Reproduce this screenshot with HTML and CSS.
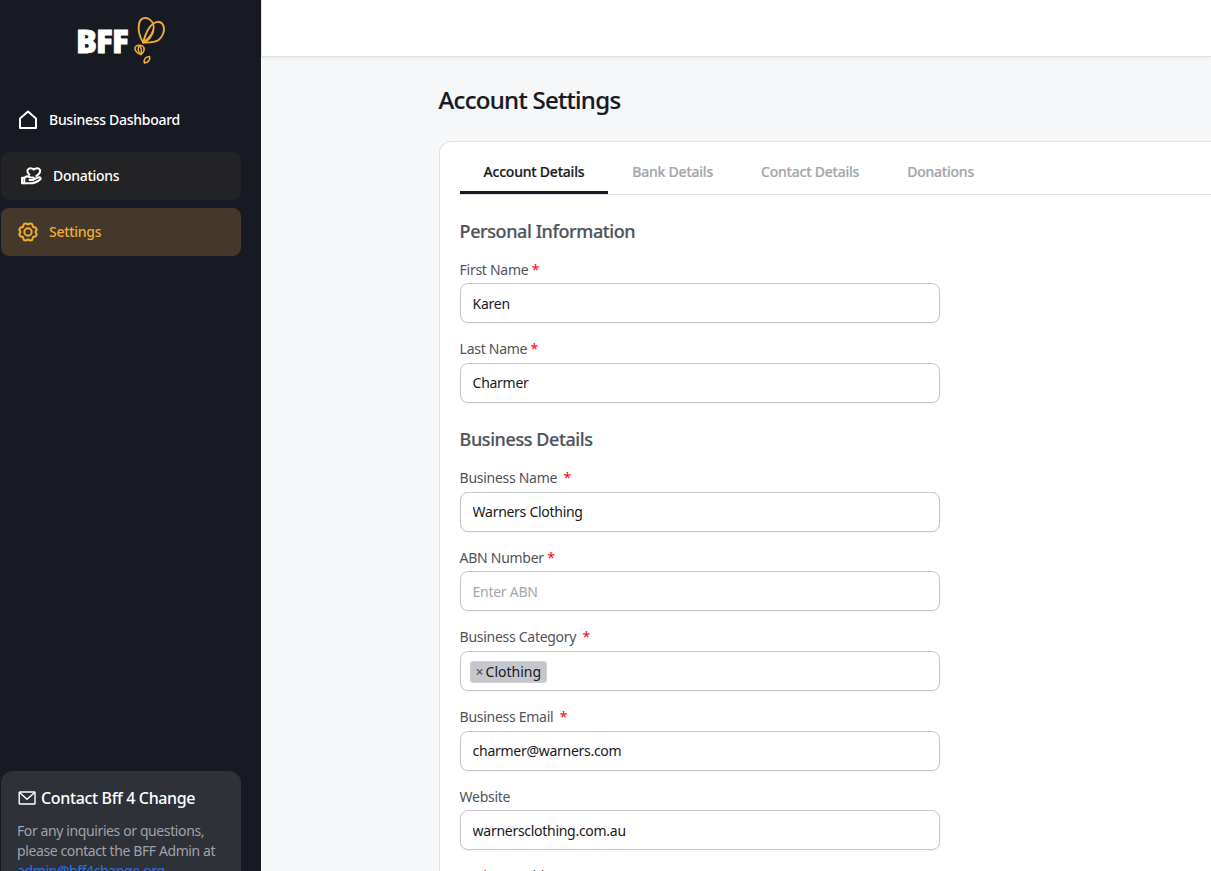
FILE: index.html
```html
<!DOCTYPE html>
<html lang="en">
<head>
  <meta charset="UTF-8">
  <meta name="viewport" content="width=device-width, initial-scale=1.0">
  <title>Account Settings</title>
  <link rel="stylesheet" href="styles.css">
</head>
<body>
  <aside class="sidebar">
    <div class="logo">
      <span class="logo-text">BFF</span>
      <svg class="logo-mark" width="32" height="50" viewBox="0 0 32 50" fill="none" stroke="#f0ac35" stroke-width="1.9" stroke-linecap="round" stroke-linejoin="round">
        <path d="M10.3 26.5C6 20 5 13.500 6 8C7 2 12 .8 16 3C20.500 5.800 21.500 11 20 15.500C18 20 14 24 10.300 26.500Z"/>
        <path d="M10.300 26.500C12 19 15 11.500 20 7.800C24 4.500 29 5.500 30.500 10C32 15 29.500 21 25.500 24C21 27 15 26.500 10.300 26.500Z"/>
        <path d="M10.300 26.500C15 25 20 19.500 20 14.500"/>
        <path d="M8 38.500C4 37.500 1.500 34.500 2 31.500C3 29 7 28.500 9.500 30C12.500 32 11 36.500 8 38.500Z" stroke-width="1.500"/>
        <path d="M8 38.500C5 36 4.500 32.500 6 30.500M8 38.500C8.500 36 9 33 7 30.500" stroke-width="1.400"/>
        <path d="M11.500 47C10.500 43.500 12 41 16.500 40.500C17.500 43.500 15.500 46.500 11.500 47Z" stroke-width="1.600"/>
      </svg>
    </div>
    <nav class="menu">
      <a class="menu-item" href="#">
        <svg width="20" height="20" viewBox="0 0 20 20" fill="none" stroke="#fff" stroke-width="2" stroke-linejoin="round"><path d="M2 8.400 10 1.600 18 8.400V18H2Z"/></svg>
        <span>Business Dashboard</span>
      </a>
      <a class="menu-item donations" href="#">
        <svg width="22" height="18" viewBox="0 0 22 18" fill="none" stroke="#fff" stroke-width="2" stroke-linecap="round" stroke-linejoin="round">
          <path d="M2 10.800H4.300V16.300H2Z"/>
          <path d="M4.500 10.800C6 9 8.500 9.200 10.500 10.600H12.800C14.600 10.800 14.300 13 12.600 13H9.500M13.800 12.300 18.500 10.300C20.300 9.800 21.300 11.300 20 12.600C17 15 13.500 16.300 10 16.300H4"/>
          <path d="M9.300 7.700C7.500 6 7 4.300 7.800 2.700C9 .7 12 .7 13.800 2.700C15.600 .7 18.700 .7 19.900 2.700C20.700 5 18.700 7.500 16.300 9"/>
        </svg>
        <span>Donations</span>
      </a>
      <a class="menu-item active" href="#">
        <svg width="20" height="20" viewBox="0 0 20 20" fill="none" stroke="#f0ac35" stroke-width="2" stroke-linejoin="round">
          <path d="M7.700 1.300 10 2.500 12.300 1.300 14.200 2.100 14.900 4.700 17.700 5.700 18.700 7.700 17.500 10 18.700 12.300 17.700 14.300 14.900 15.300 14.200 17.900 12.300 18.700 10 17.500 7.700 18.700 5.800 17.900 5.100 15.300 2.300 14.300 1.300 12.300 2.500 10 1.300 7.700 2.300 5.700 5.100 4.700 5.800 2.100Z"/>
          <circle cx="10" cy="10" r="3.700"/>
        </svg>
        <span>Settings</span>
      </a>
    </nav>
    <div class="contact">
      <h4 class="contact-title">
        <svg width="20" height="16" viewBox="0 0 20 16" fill="none" stroke="#fff" stroke-width="1.4" stroke-linejoin="round"><rect x="2.200" y="2" width="15.800" height="12" rx=".6"/><path d="M2.500 2.500 10 9.300 17.700 2.500"/></svg>
        Contact Bff 4 Change
      </h4>
      <p>For any inquiries or questions, please contact the BFF Admin at <a href="#">admin@bff4change.org</a></p>
    </div>
  </aside>

  <div class="page">
    <header class="topbar"></header>
    <main class="content">
      <h1>Account Settings</h1>
      <div class="card">
        <div class="tabs">
          <a class="tab selected" href="#">Account Details</a>
          <a class="tab" href="#">Bank Details</a>
          <a class="tab" href="#">Contact Details</a>
          <a class="tab" href="#">Donations</a>
        </div>
        <form class="form">
          <h3>Personal Information</h3>
          <div class="field">
            <label for="first">First Name <span class="req">*</span></label>
            <input type="text" id="first" value="Karen">
          </div>
          <div class="field">
            <label for="last">Last Name <span class="req">*</span></label>
            <input type="text" id="last" value="Charmer">
          </div>
          <h3 class="second">Business Details</h3>
          <div class="field">
            <label for="business">Business Name <span class="req wide">*</span></label>
            <input type="text" id="business" value="Warners Clothing">
          </div>
          <div class="field">
            <label for="abn">ABN Number <span class="req">*</span></label>
            <input type="text" id="abn" placeholder="Enter ABN">
          </div>
          <div class="field">
            <label>Business Category <span class="req wide">*</span></label>
            <div class="select">
              <span class="tag"><span class="tag-remove">×</span>Clothing</span>
            </div>
          </div>
          <div class="field">
            <label for="email">Business Email <span class="req wide">*</span></label>
            <input type="text" id="email" value="charmer@warners.com">
          </div>
          <div class="field">
            <label for="website">Website</label>
            <input type="text" id="website" value="warnersclothing.com.au">
          </div>
          <div class="field">
            <label for="address">Business Address</label>
            <input type="text" id="address">
          </div>
        </form>
      </div>
    </main>
  </div>
</body>
</html>
```

FILE: styles.css
```css
* {
  box-sizing: border-box;
}

body {
  margin: 0;
  height: 100vh;
  display: flex;
  overflow: hidden;
  background: #f6f7f9;
  font-family: "Noto Sans", sans-serif;
  font-size: 14px;
  line-height: 1.4;
  letter-spacing: -0.02em;
  color: #171923;
}

a {
  text-decoration: none;
}

h1,
h3,
h4,
p {
  margin: 0;
}

/* Sidebar */
.sidebar {
  width: 261px;
  flex-shrink: 0;
  display: flex;
  flex-direction: column;
  background: #171923;
  color: #fff;
}

.logo {
  display: flex;
  padding: 16px 0 0 76px;
  height: 96px;
}

.logo-text {
  width: 57px;
  padding-top: 4px;
  font-family: "Open Sans", sans-serif;
  font-size: 31px;
  font-weight: 800;
  letter-spacing: -0.8px;
  line-height: 42px;
  -webkit-text-stroke: 0.9px #fff;
}

.logo-mark {
  flex-shrink: 0;
}

.menu {
  display: flex;
  flex-direction: column;
  gap: 8px;
  padding: 0 20px 0 1px;
}

.menu-item {
  display: flex;
  align-items: center;
  gap: 11px;
  height: 48px;
  padding-left: 17px;
  border-radius: 8px;
  color: #fff;
  font-weight: 500;
}

.menu-item.donations {
  padding-left: 19px;
  background: #232325;
}

.menu-item.active {
  background: #433829;
  color: #f0ac35;
}

.contact {
  flex-shrink: 0;
  height: 130px;
  margin: auto 20px -30px 1px;
  padding: 16px;
  border-radius: 12px;
  background: #2f3139;
  color: #9fa2a9;
}

.contact p {
  margin-top: 12px;
  line-height: 20px;
  letter-spacing: -0.028em;
}

.contact a {
  color: #2f6fe4;
}

.contact-title {
  display: flex;
  align-items: center;
  gap: 4px;
  color: #fff;
  font-size: 16px;
  font-weight: 500;
  letter-spacing: -0.022em;
}

/* Main area */
.page {
  flex: 1;
  min-width: 0;
}

.topbar {
  height: 57px;
  background: #fff;
  border-left: 1px solid #dfe1e4;
  border-bottom: 1px solid #dfe1e4;
  box-shadow: 0 1px 3px rgba(0, 0, 0, 0.06);
}

.content {
  padding: 26px 0 0 177.6px;
}

h1 {
  font-size: 24px;
  font-weight: 500;
  line-height: 34px;
  letter-spacing: -0.029em;
  -webkit-text-stroke: 0.2px;
}

.card {
  margin-top: 24px;
  padding: 11px 20px 0;
  border: 1px solid #dfe1e4;
  border-right: 0;
  border-radius: 12px 0 0 0;
  background: #fff;
}

.tabs {
  display: flex;
  height: 42px;
  margin-right: -20px;
  border-bottom: 1px solid #dfe1e4;
}

.tab {
  height: 41px;
  padding: 9px 24px 0;
  color: #a3a6ad;
  font-weight: 500;
  letter-spacing: -0.016em;
  -webkit-text-stroke: 0.2px;
}

.tab.selected {
  color: #171923;
  border-bottom: 3px solid #171923;
}

.form {
  width: 480px;
  padding-top: 23.6px;
}

h3 {
  margin-bottom: 16px;
  color: #50535a;
  font-size: 18px;
  font-weight: 500;
  letter-spacing: -0.023em;
  -webkit-text-stroke: 0.2px;
}

h3.second {
  margin-top: 24px;
}

.field {
  margin-bottom: 16px;
}

.field label {
  display: block;
  height: 19.6px;
  margin-bottom: 4px;
  color: #50535a;
}

.req {
  color: #f00;
}

.req.wide {
  margin-left: 3px;
}

.field input,
.select {
  display: block;
  width: 100%;
  height: 40px;
  padding: 0 12px;
  border: 1px solid #c5c7cc;
  border-radius: 8px;
  background: #fff;
  box-shadow: 0 1px 2px rgba(0, 0, 0, 0.05);
  color: #171923;
  font: inherit;
  letter-spacing: inherit;
}

.field input::placeholder {
  color: #a3a6ad;
}

.select {
  display: flex;
  align-items: center;
  padding: 2px 9px 0;
}

.tag {
  display: flex;
  align-items: center;
  height: 22px;
  padding: 0 5px;
  border: 1px solid #cfd1d5;
  border-radius: 3px;
  background: #c5c7cc;
  letter-spacing: 0;
}

.tag-remove {
  margin-right: 2px;
  color: #50535a;
  font-size: 14px;
  font-weight: 500;
}
```
